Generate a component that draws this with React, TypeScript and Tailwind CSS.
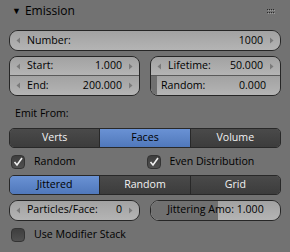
import { ReactNode } from 'react';
import clsx from 'clsx';

const Arrow = ({ dir }: { dir: 'l' | 'r' }) => (
  <svg width="5" height="7" viewBox="0 0 5 7" className="shrink-0">
    <path d={dir === 'l' ? 'M4 0.5 L0.5 3.5 L4 6.5 Z' : 'M1 0.5 L4.5 3.5 L1 6.5 Z'} fill="#7a7a7a" />
  </svg>
);

const NumRow = ({ label, value, className }: { label: string; value: string; className?: string }) => (
  <div className={clsx('flex h-[19px] items-center whitespace-nowrap bg-gradient-to-b from-[#a2a2a2] to-[#b4b4b4] px-[6px]', className)}>
    <Arrow dir="l" />
    <span className="ml-[6px]">{label}</span>
    <span className="ml-auto mr-[6px]">{value}</span>
    <Arrow dir="r" />
  </div>
);

const SliderRow = ({
  label,
  value,
  fill,
  center,
  className,
}: {
  label: string;
  value: string;
  fill: string;
  center?: boolean;
  className?: string;
}) => (
  <div
    className={clsx(
      'relative flex h-[19px] items-center overflow-hidden whitespace-nowrap bg-gradient-to-b from-[#a2a2a2] to-[#b4b4b4] px-[10px]',
      center && 'justify-center',
      className,
    )}
  >
    <div className={clsx('absolute inset-y-0 left-0 bg-[#707070]', fill)} />
    {center ? (
      <span className="relative">
        {label} {value}
      </span>
    ) : (
      <>
        <span className="relative">{label}</span>
        <span className="relative ml-auto mr-[4px]">{value}</span>
      </>
    )}
  </div>
);

const Check = ({ on, label }: { on: boolean; label: string }) => (
  <div className="flex items-center gap-[9px]">
    <div className="flex h-[14px] w-[14px] items-center justify-center rounded-[4px] border border-[#333] bg-gradient-to-b from-[#3e3e3e] to-[#505050]">
      {on && (
        <svg width="10" height="10" viewBox="0 0 10 10">
          <path d="M1.5 5 L4 8 L9 1" stroke="#f0f0f0" strokeWidth="1.6" fill="none" />
        </svg>
      )}
    </div>
    <span>{label}</span>
  </div>
);

const Seg = ({ items, active }: { items: string[]; active: number }) => (
  <div className="flex h-[20px] overflow-hidden rounded-[5px] border border-[#282828]">
    {items.map((it, i) => (
      <div
        key={it}
        className={clsx(
          'flex flex-1 items-center justify-center',
          i > 0 && 'border-l border-[#282828]',
          i === active
            ? 'bg-gradient-to-b from-[#6a92d4] to-[#5078bb] text-black'
            : 'bg-gradient-to-b from-[#4a4a4a] to-[#3c3c3c] text-[#f2f2f2]',
        )}
      >
        {it}
      </div>
    ))}
  </div>
);

const Col = ({ children }: { children: ReactNode }) => (
  <div className="flex flex-1 flex-col overflow-hidden rounded-[8px] border border-[#262626]">{children}</div>
);

export default function App() {
  return (
    <div
      className="h-[252px] w-[290px] overflow-hidden bg-[#727272] text-[10.6px] text-black"
      style={{ fontFamily: '"Open Sans", "Noto Sans", sans-serif' }}
    >
      <div className="flex h-[22px] items-center pl-[12px] pr-[14px]">
        <span className="text-[9px]">▼</span>
        <span className="ml-[4px] text-[12px]">Emission</span>
        <svg width="9" height="5" className="ml-auto" viewBox="0 0 9 5">
          {[0, 2, 4, 6].map((x) => (
            <g key={x}>
              <rect x={x} y={0} width="1" height="1" fill="#2a2a2a" />
              <rect x={x} y={3} width="1" height="1" fill="#2a2a2a" />
              <rect x={x + 1} y={1} width="1" height="1" fill="#9a9a9a" />
              <rect x={x + 1} y={4} width="1" height="1" fill="#9a9a9a" />
            </g>
          ))}
        </svg>
      </div>

      <div className="flex flex-col px-[9px]">
        <div className="mt-[8px] overflow-hidden rounded-[9px] border border-[#262626]">
          <NumRow label="Number:" value="1000" />
        </div>

        <div className="mt-[5px] flex gap-[10px]">
          <Col>
            <NumRow label="Start:" value="1.000" className="border-b border-[#5a5a5a]" />
            <NumRow label="End:" value="200.000" />
          </Col>
          <Col>
            <NumRow label="Lifetime:" value="50.000" className="border-b border-[#5a5a5a]" />
            <SliderRow label="Random:" value="0.000" fill="w-[6px]" />
          </Col>
        </div>

        <div className="mt-[10px] pl-[6px] leading-[14px]">Emit From:</div>

        <div className="mt-[8px]">
          <Seg items={['Verts', 'Faces', 'Volume']} active={1} />
        </div>

        <div className="mt-[6px] flex">
          <div className="flex-1 pl-[2px]">
            <Check on label="Random" />
          </div>
          <div className="flex-1 pl-[1px]">
            <Check on label="Even Distribution" />
          </div>
        </div>

        <div className="mt-[5px]">
          <Seg items={['Jittered', 'Random', 'Grid']} active={0} />
        </div>

        <div className="mt-[5px] flex gap-[10px]">
          <div className="flex-1 overflow-hidden rounded-[9px] border border-[#262626]">
            <NumRow label="Particles/Face:" value="0" />
          </div>
          <div className="flex-1 overflow-hidden rounded-[9px] border border-[#262626]">
            <SliderRow label="Jittering Amo:" value="1.000" fill="w-[52%]" center />
          </div>
        </div>

        <div className="mt-[6px] pl-[2px]">
          <Check on={false} label="Use Modifier Stack" />
        </div>
      </div>
    </div>
  );
}
